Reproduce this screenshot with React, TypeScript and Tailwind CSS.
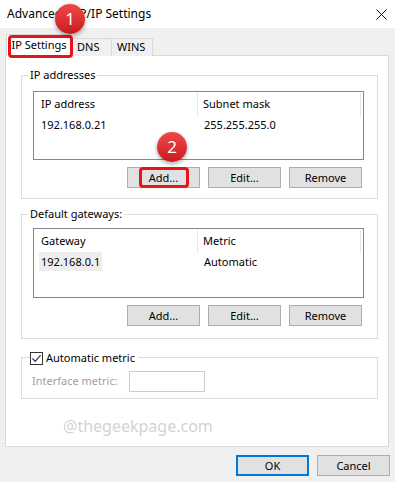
import React from "react";

const FONT = { fontFamily: '"Noto Sans", "Open Sans", sans-serif' };

function WinButton({ label, primary }: { label: string; primary?: boolean }) {
  return (
    <button
      className={
        "w-[73px] h-[21px] bg-[#e1e1e1] text-[11px] leading-none text-black flex items-center justify-center " +
        (primary ? "border-2 border-[#0078d7]" : "border border-[#adadad]")
      }
    >
      {label}
    </button>
  );
}

function Badge({ n, className }: { n: string; className: string }) {
  return (
    <div
      className={
        "absolute w-[30px] h-[30px] rounded-full bg-gradient-to-b from-[#f04848] to-[#c8181c] text-white text-[17px] flex items-center justify-center shadow-[0_2px_4px_rgba(0,0,0,0.35)] " +
        className
      }
    >
      {n}
    </div>
  );
}

function ListBox({
  cols,
  row,
  highlight,
  tall,
}: {
  cols: [string, string];
  row: [string, string];
  highlight?: boolean;
  tall?: boolean;
}) {
  return (
    <div
      className={
        "w-[331px] border border-[#828790] bg-white flex flex-col " +
        (tall ? "h-[70px]" : "h-[69px]")
      }
    >
      {/* header */}
      <div className="flex h-[24px] pt-[1px]">
        <div className="w-[164px] pl-[7px] flex items-center border-r border-[#e5e5e5]">
          {cols[0]}
        </div>
        <div className="w-[163px] pl-[5px] flex items-center border-r border-[#e5e5e5]">
          {cols[1]}
        </div>
      </div>
      {/* row */}
      <div className="flex h-[19px] items-center">
        <div className="w-[164px] pl-[5px]">
          <span className={"px-[2px] py-[2px] " + (highlight ? "bg-[#eeeeee]" : "")}>
            {row[0]}
          </span>
        </div>
        <div className="pl-[6px]">{row[1]}</div>
      </div>
    </div>
  );
}

export default function App() {
  return (
    <div
      className="relative w-[395px] h-[482px] bg-[#f0f0f0] text-[11px] text-black overflow-hidden"
      style={FONT}
    >
      {/* Title bar */}
      <div className="h-[28px] bg-white flex items-center justify-between pl-[7px] pr-[7px]">
        <span className="text-[12px]">Advanced TCP/IP Settings</span>
        <svg width="11" height="11" viewBox="0 0 11 11" className="mr-[1px]">
          <path d="M0.5 0.5 L10.5 10.5 M10.5 0.5 L0.5 10.5" stroke="#111" strokeWidth="1" />
        </svg>
      </div>

      {/* Tabs */}
      <div className="relative z-10 h-[28px] -mb-[1px] flex items-end pl-[6px]">
        <div className="h-[22px] w-[66px] bg-white border-t border-l border-r border-[#d9d9d9] flex items-center justify-center">
          IP Settings
        </div>
        <div className="h-[18px] w-[40px] bg-[#f0f0f0] border-t border-r border-[#d9d9d9] pl-[5px] flex items-center">
          DNS
        </div>
        <div className="h-[18px] w-[41px] bg-[#f0f0f0] border-t border-r border-[#d9d9d9] pl-[5px] flex items-center">
          WINS
        </div>
      </div>

      {/* Panel */}
      <div className="ml-[5px] w-[384px] h-[392px] bg-white border border-[#d9d9d9] flex flex-col">
        {/* IP addresses */}
        <div className="relative mt-[19px] ml-[15px] w-[357px] h-[124px] border border-[#dcdcdc] pt-[15px] pl-[11px]">
          <span className="absolute -top-[9px] left-[6px] bg-white px-[2px] leading-[16px]">
            IP addresses
          </span>
          <ListBox cols={["IP address", "Subnet mask"]} row={["192.168.0.21", "255.255.255.0"]} />
          <div className="w-[331px] mt-[7px] pr-[2px] flex justify-end gap-[8px]">
            <WinButton label="Add..." />
            <WinButton label="Edit..." />
            <WinButton label="Remove" />
          </div>
        </div>

        {/* Default gateways */}
        <div className="relative mt-[15px] ml-[15px] w-[357px] h-[125px] border border-[#dcdcdc] pt-[13px] pl-[11px]">
          <span className="absolute -top-[9px] left-[6px] bg-white px-[2px] leading-[16px]">
            Default gateways:
          </span>
          <ListBox cols={["Gateway", "Metric"]} row={["192.168.0.1", "Automatic"]} highlight tall />
          <div className="w-[331px] mt-[7px] pr-[2px] flex justify-end gap-[8px]">
            <WinButton label="Add..." />
            <WinButton label="Edit..." />
            <WinButton label="Remove" />
          </div>
        </div>

        {/* Automatic metric */}
        <div className="relative mt-[18px] ml-[15px] w-[357px] h-[42px] border border-[#dcdcdc] pt-[13px] pl-[10px] flex items-start">
          <div className="absolute -top-[7px] left-[8px] bg-white pr-[3px] flex items-center gap-[3px]">
            <div className="w-[13px] h-[13px] border border-[#333] bg-white flex items-center justify-center">
              <svg width="11" height="11" viewBox="0 0 11 11">
                <path d="M1.5 5.5 L4.2 8.3 L9.6 2.2" stroke="#333" strokeWidth="1.2" fill="none" />
              </svg>
            </div>
            <span className="leading-[14px]">Automatic metric</span>
          </div>
          <span className="text-[#a0a0a0] leading-[20px] w-[97px]">Interface metric:</span>
          <div className="w-[76px] h-[21px] border border-[#cccccc] bg-white" />
        </div>

        {/* Watermark */}
        <div className="mt-[15px] ml-[57px] text-[16px] text-[#d3d3d3]">
          @thegeekpage.com
        </div>
      </div>

      {/* Bottom buttons */}
      <div className="mt-[8px] w-[390px] flex justify-end gap-[8px]">
        <WinButton label="OK" primary />
        <WinButton label="Cancel" />
      </div>

      {/* Annotations */}
      <div className="absolute left-[8px] top-[35px] w-[65px] h-[23px] border-[3px] border-[#e8141c] rounded-[4px] z-20" />
      <div className="absolute left-[139px] top-[167px] w-[50px] h-[21px] border-[3px] border-[#e8141c] rounded-[4px] z-20" />
      <Badge n="1" className="left-[55px] top-[4px] z-30" />
      <Badge n="2" className="left-[157px] top-[132px] z-30" />
    </div>
  );
}
